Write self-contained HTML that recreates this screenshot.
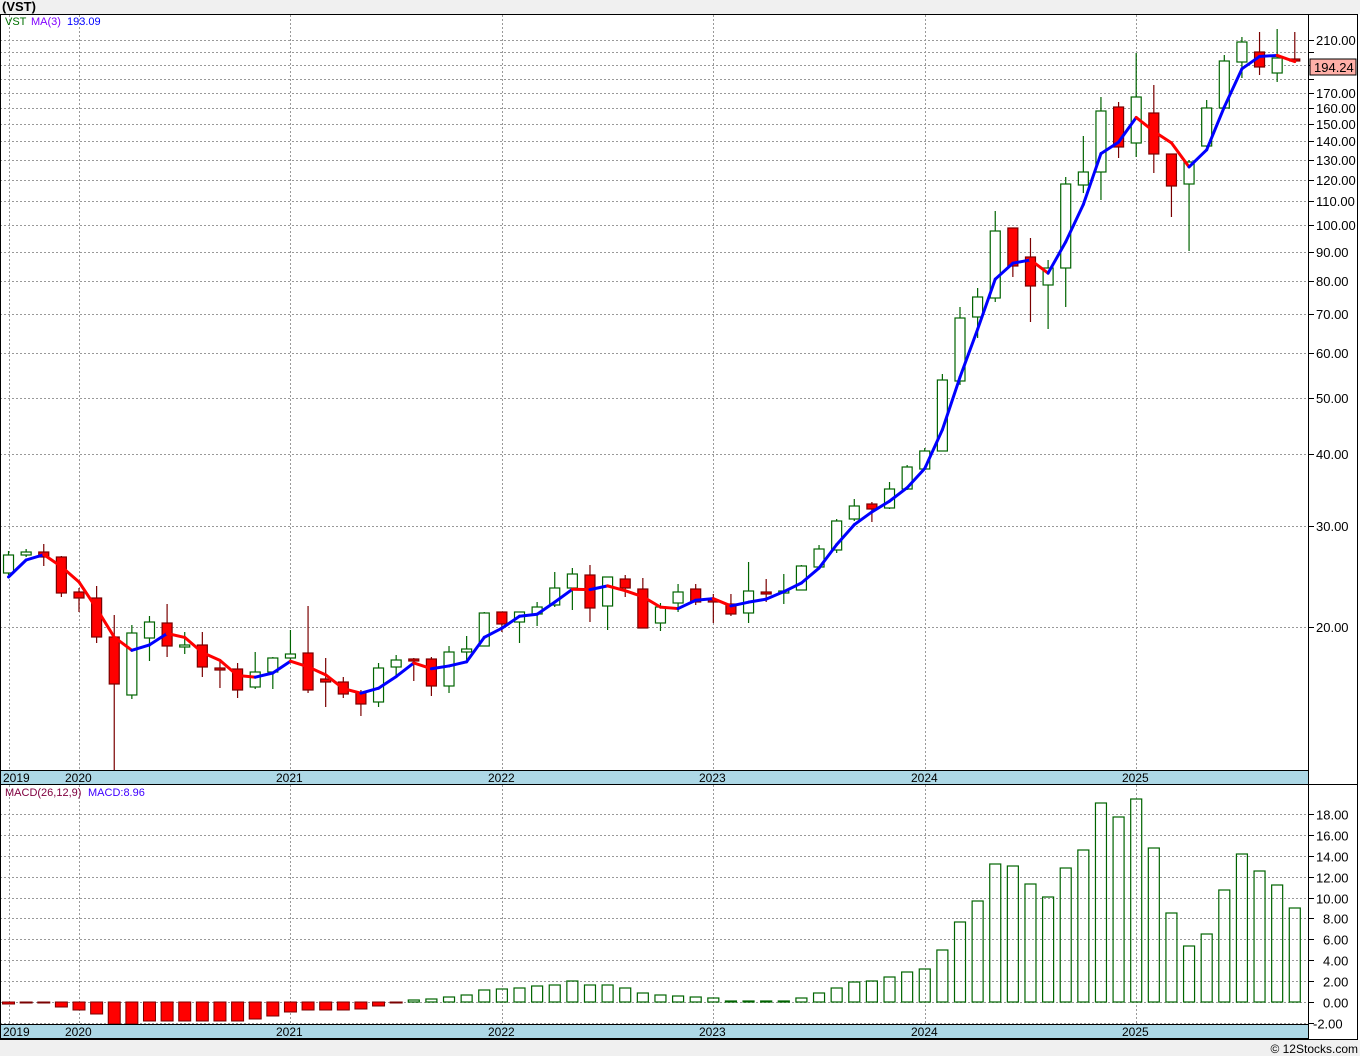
<!DOCTYPE html>
<html><head><meta charset="utf-8"><style>
html,body{margin:0;padding:0;background:#f0f0f0;}
svg{display:block;font-family:"Liberation Sans",sans-serif;}
</style></head><body>
<svg id="s" width="1360" height="1056" xmlns="http://www.w3.org/2000/svg"></svg>
<script>
var S=document.getElementById('s');var o=[];
function yp(p){return 627-574.8*Math.log10(p/20);}
function pv(y){return 20*Math.pow(10,(627-y)/574.8);}
function X(i){return 79+17.62*(i-4);}
o.push('<rect x="0" y="14" width="1360" height="1026" fill="#fff"/>');
o.push('<text x="2" y="11" font-size="13" font-weight="bold" fill="#000">(VST)</text>');
var lv=[20,30,40,50,60,70,80,90,100,110,120,130,140,150,160,170,180,190,200,210];
var lab=[20,30,40,50,60,70,80,90,100,110,120,130,140,150,160,170,210];
lv.forEach(function(p){var y=Math.round(yp(p))+.5;o.push('<line x1="0" x2="1308" y1="'+y+'" y2="'+y+'" stroke="#999" stroke-dasharray="2,2"/>');o.push('<line x1="1308" x2="1314" y1="'+y+'" y2="'+y+'" stroke="#000"/>');});
lab.forEach(function(p){var y=Math.round(yp(p));o.push('<text x="1316" y="'+(y+5)+'" font-size="13" fill="#000">'+p.toFixed(2)+'</text>');});
for(var v=-2;v<=18;v+=2){var y=Math.round(1002-v*10.44)+.5;o.push('<line x1="0" x2="1308" y1="'+y+'" y2="'+y+'" stroke="#999" stroke-dasharray="2,2"/>');o.push('<line x1="1308" x2="1314" y1="'+y+'" y2="'+y+'" stroke="#000"/>');o.push('<text x="'+(v<0?1313:(v>=10?1316:1323))+'" y="'+(y+5)+'" font-size="13" fill="#000">'+v.toFixed(2)+'</text>');}
var G=[9,79,290,502,713,925,1136];
G.forEach(function(x){o.push('<line x1="'+(x+.5)+'" x2="'+(x+.5)+'" y1="15" y2="770" stroke="#999" stroke-dasharray="2,2"/>');o.push('<line x1="'+(x+.5)+'" x2="'+(x+.5)+'" y1="785" y2="1024" stroke="#999" stroke-dasharray="2,2"/>');});
var C=[[551,575,573,555],[549,557,555,552],[544,566,552,557],[556,597,557,593],[588,612,592,598],[586,643,598,637],[615,770,637,684],[625,699,695,633],[616,661,638,622],[604,657,623,646],[632,654,646,645],[632,677,645,667],[662,688,668,670],[663,698,669,690],[652,689,687,672],[657,689,672,658],[630,662,658,654],[606,693,653,690],[658,707,679,682],[677,698,682,694],[690,716,693,704],[663,707,702,668],[655,676,667,660],[658,681,659,661],[657,696,659,686],[646,693,686,652],[636,660,652,649],[612,646,646,613],[612,632,612,624],[612,643,622,612],[602,626,614,607],[572,607,605,588],[568,610,588,574],[565,622,575,608],[577,630,606,577],[575,597,579,588],[578,628,589,628],[603,631,623,607],[584,612,603,592],[584,605,589,602],[594,623,600,602],[594,616,604,614],[562,623,613,591],[579,602,592,593],[574,604,593,591],[565,590,590,566],[545,568,567,549],[519,553,550,521],[499,521,519,506],[502,522,504,509],[482,509,508,489],[465,490,489,467],[448,470,469,451],[374,451,451,380],[307,385,381,318],[288,338,317,297],[211,302,298,231],[228,277,228,266],[238,322,257,286],[260,329,285,268],[177,307,268,184],[136,193,185,172],[97,200,172,111],[102,158,107,147],[53,157,143,97],[85,173,113,154],[154,217,154,186],[160,251,184,162],[100,147,146,108],[55,108,108,61],[37,78,62,42],[32,75,52,67],[29,82,73,58],[32,60,59,60]];
var M=[577,560];for(var i=2;i<C.length;i++){var a=(pv(C[i][3])+pv(C[i-1][3])+pv(C[i-2][3]))/3;M.push(yp(a));}
C.forEach(function(c,i){var x=X(i),up=c[3]<=c[2],col=up?'#006400':'#7a0000';
o.push('<line x1="'+x+'" x2="'+x+'" y1="'+c[0]+'" y2="'+c[1]+'" stroke="'+col+'" stroke-width="1.2"/>');
var t=Math.min(c[2],c[3]),h=Math.max(2,Math.abs(c[2]-c[3]));
o.push('<rect x="'+(x-5)+'" y="'+t+'" width="10" height="'+h+'" fill="'+(up?'#fff':'#f00')+'" stroke="'+col+'" stroke-width="1.2"/>');});
for(var i=1;i<M.length;i++){o.push('<line x1="'+X(i-1)+'" y1="'+M[i-1]+'" x2="'+X(i)+'" y2="'+M[i]+'" stroke="'+(M[i]<=M[i-1]?'#0000ff':'#ff0000')+'" stroke-width="3" stroke-linecap="round"/>');}
var H=[1004,1003,1003,1007,1010,1014,1024,1024,1021,1021,1021,1021,1021,1021,1019,1016,1012,1010,1010,1010,1009,1006,1003,1000,999,997,995,990,989,988,986,985,981,985,985,988,993,995,996,997,998,1001,1001,1001,1001,998,993,988,982,981,977,972,969,950,922,901,864,866,884,897,868,850,803,817,799,848,913,946,934,890,854,871,885,908];
H.forEach(function(y,i){var x=X(i);if(y>1002){o.push('<rect x="'+(x-6)+'" y="1002" width="12" height="'+(y-1002)+'" fill="#f00" stroke="#7a0000"/>');}else if(y<1002){o.push('<rect x="'+(x-5.5)+'" y="'+y+'" width="11" height="'+(1002-y)+'" fill="none" stroke="#006400" stroke-width="1.2"/>');}});
o.push('<rect x="1310" y="59" width="46" height="16" fill="#ffb0a8" stroke="#000"/><text x="1314" y="72" font-size="13">194.24</text>');
o.push('<text x="5" y="25" font-size="11" fill="#007000">VST</text><text x="31" y="25" font-size="11" fill="#8000ff">MA(3)</text><text x="67" y="25" font-size="11" fill="#0000ff">193.09</text>');
o.push('<text x="5" y="796" font-size="11" fill="#800040">MACD(26,12,9)</text><text x="88" y="796" font-size="11" fill="#4000ff">MACD:8.96</text>');
[770,1024].forEach(function(y){o.push('<rect x="0" y="'+y+'" width="1308" height="14" fill="#add8e6"/><line x1="0" x2="1308" y1="'+(y+.5)+'" y2="'+(y+.5)+'" stroke="#000"/><line x1="0" x2="1308" y1="'+(y+14.5)+'" y2="'+(y+14.5)+'" stroke="#000"/>');
[['2019',3],['2020',65],['2021',276],['2022',488],['2023',699],['2024',911],['2025',1122]].forEach(function(l){o.push('<text x="'+l[1]+'" y="'+(y+12)+'" font-size="12" fill="#000">'+l[0]+'</text>');});});
o.push('<rect x="0.5" y="14.5" width="1357" height="1025" fill="none" stroke="#000"/>');
o.push('<line x1="1308.5" x2="1308.5" y1="14" y2="1040" stroke="#000"/>');
o.push('<line x1="0" x2="1358" y1="784.5" y2="784.5" stroke="#000"/>');
o.push('<rect x="0" y="1041" width="1360" height="15" fill="#f0f0f0"/><text x="1358" y="1053" font-size="12" text-anchor="end">© 12Stocks.com</text>');
S.innerHTML=o.join('');
</script>
</body></html>
